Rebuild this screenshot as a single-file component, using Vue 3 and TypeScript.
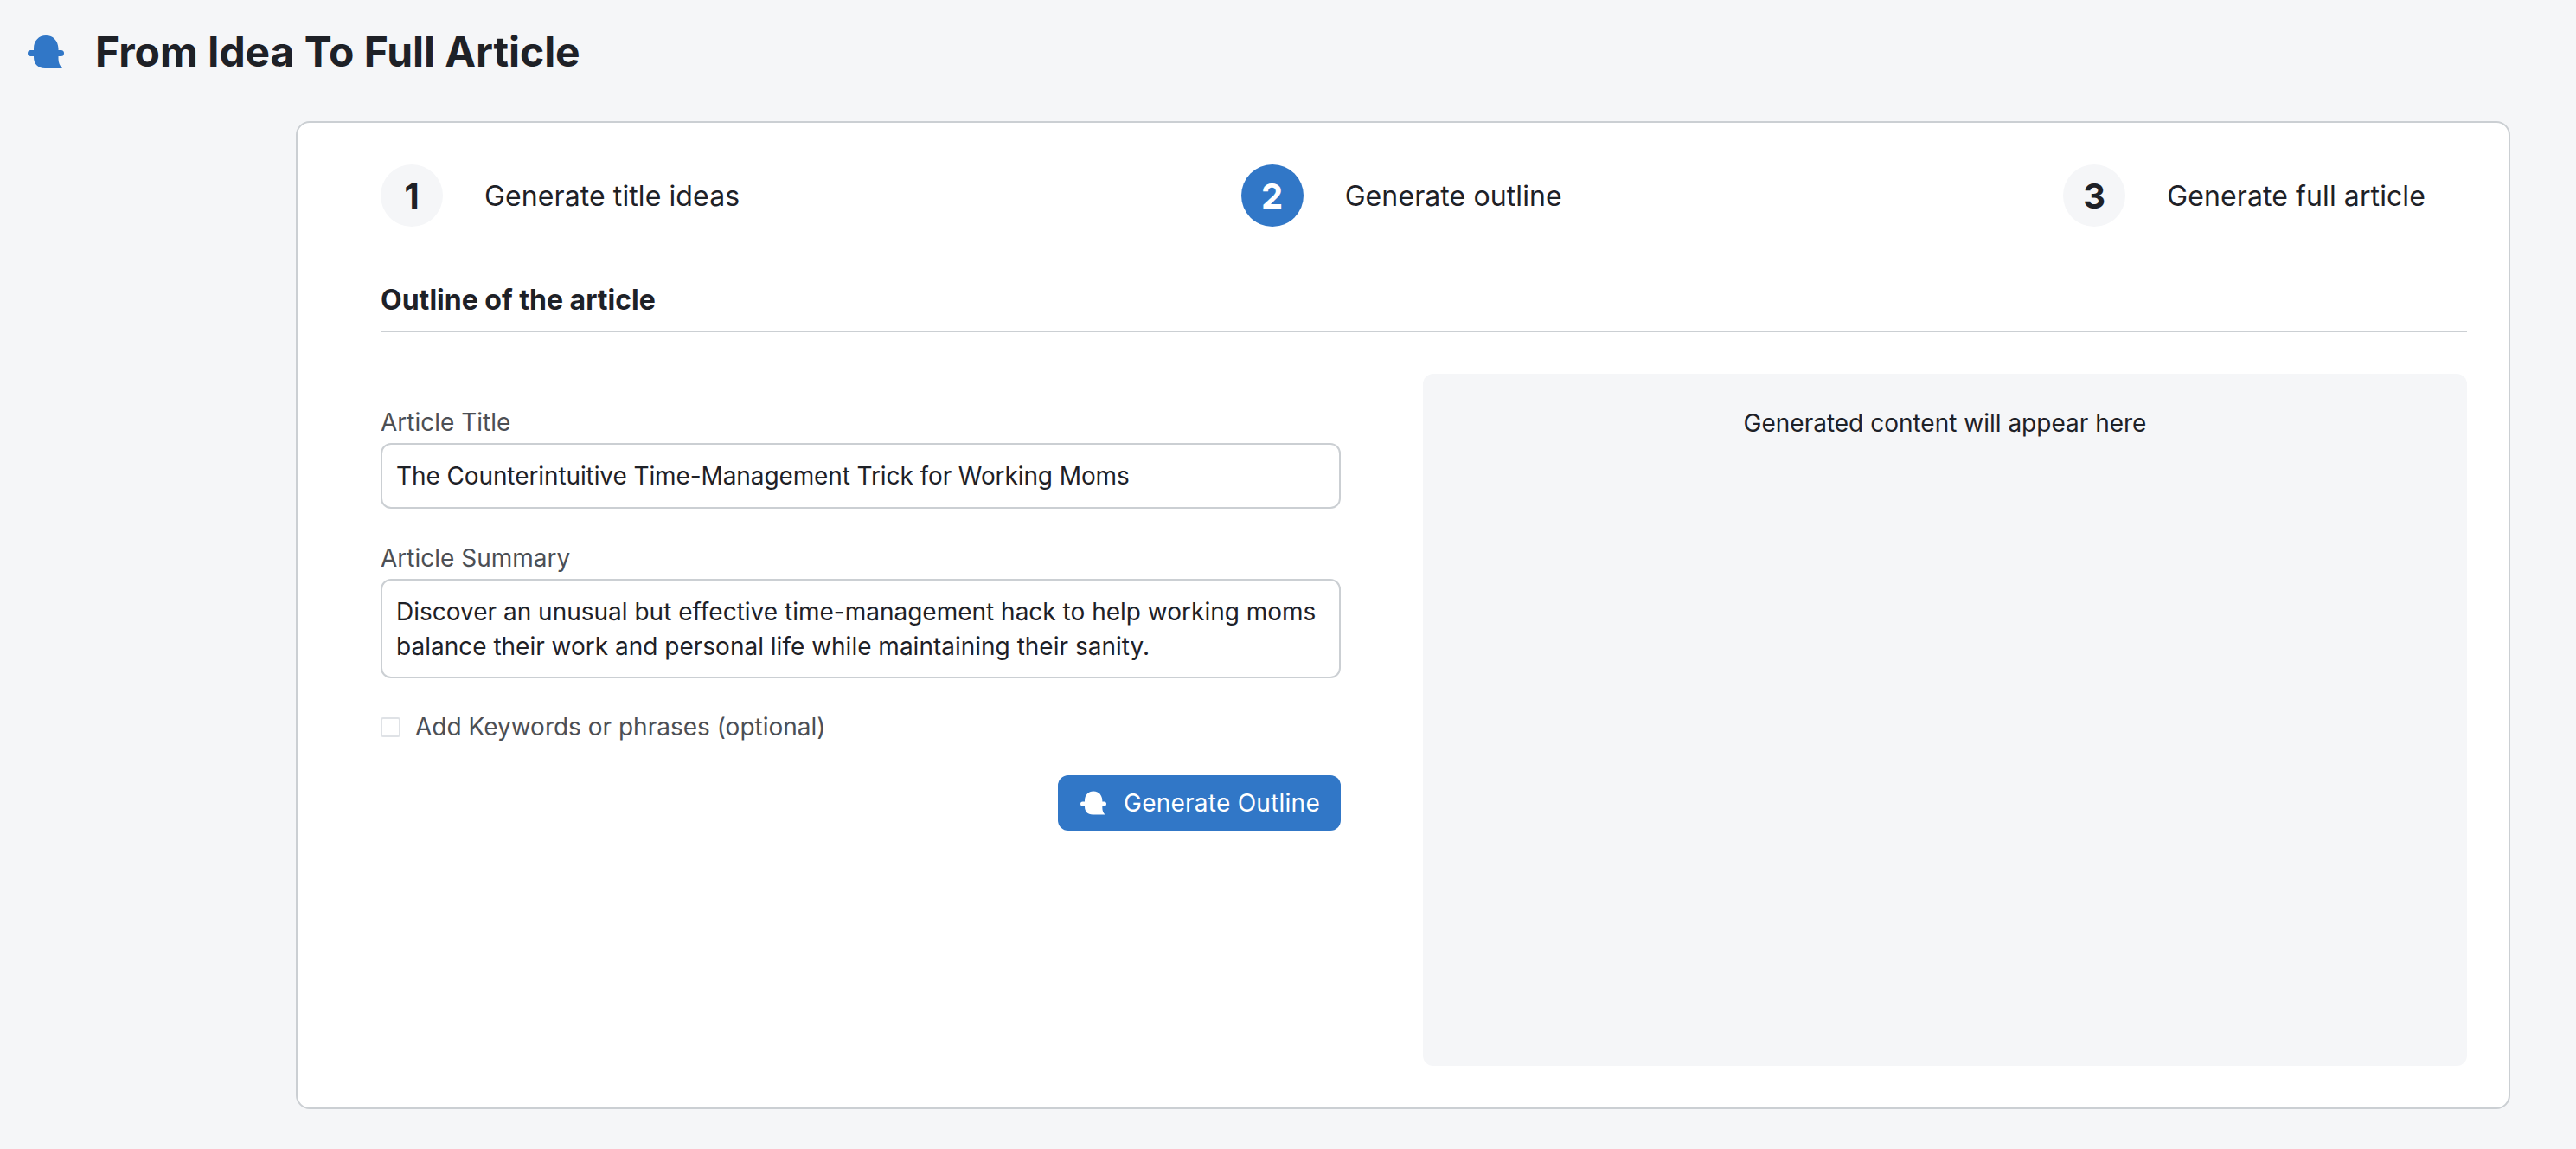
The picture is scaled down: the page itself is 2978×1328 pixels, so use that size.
<script setup lang="ts">
import { ref } from 'vue'

const steps = [
  { n: 1, label: 'Generate title ideas', active: false },
  { n: 2, label: 'Generate outline', active: true },
  { n: 3, label: 'Generate full article', active: false },
]
const title = ref('The Counterintuitive Time-Management Trick for Working Moms')
const summary = ref('Discover an unusual but effective time-management hack to help working moms balance their work and personal life while maintaining their sanity.')
const keywords = ref(false)
const bust = 'M21 0C29.5 0 35 6 35.5 15V27C35.5 31 37 35 40 38H20C11.5 38 7 32.5 7 25V15C7 6 13 0 21 0Z'
</script>

<template>
  <div class="page">
    <header class="header">
      <svg class="logo" viewBox="0 0 42 38" aria-hidden="true">
        <path :d="bust" />
        <rect x="0" y="17" width="42" height="7" rx="3.5" />
      </svg>
      <h1 class="title">From Idea To Full Article</h1>
    </header>

    <main class="card">
      <ol class="steps">
        <li v-for="s in steps" :key="s.n" class="step">
          <span class="num" :class="{ active: s.active }">{{ s.n }}</span>
          <span class="step-label">{{ s.label }}</span>
        </li>
      </ol>

      <h2 class="section">Outline of the article</h2>

      <div class="columns">
        <form class="form" @submit.prevent>
          <label class="field">
            <span class="label">Article Title</span>
            <input v-model="title" class="control input" type="text" />
          </label>
          <label class="field summary">
            <span class="label">Article Summary</span>
            <textarea v-model="summary" class="control textarea" rows="2"></textarea>
          </label>
          <label class="check">
            <input v-model="keywords" class="box" type="checkbox" />
            <span>Add Keywords or phrases (optional)</span>
          </label>
          <div class="actions">
            <button class="btn" type="submit">
              <svg class="btn-icon" viewBox="0 0 42 38" aria-hidden="true">
                <path :d="bust" />
                <rect x="0" y="17" width="42" height="7" rx="3.5" />
              </svg>
              Generate Outline
            </button>
          </div>
        </form>
        <section class="output">Generated content will appear here</section>
      </div>
    </main>
  </div>
</template>

<style>
html, body { margin: 0; background: #f5f6f8; }
</style>

<style scoped>
.page {
  box-sizing: border-box;
  width: 2978px;
  height: 1328px;
  padding: 28px 76px 46px 32px;
  background: #f5f6f8;
  color: #1e2127;
  font-family: Inter, "Liberation Sans", sans-serif;
}
.header { display: flex; align-items: center; gap: 36px; height: 64px; }
.logo { width: 42px; height: 38px; fill: #3177c7; }
.title {
  margin: 0;
  font-size: 48px;
  line-height: 64px;
  font-weight: 700;
  letter-spacing: -0.05px;
}
.card {
  box-sizing: border-box;
  display: flex;
  flex-direction: column;
  height: 1142px;
  margin: 48px 0 0 310px;
  padding: 48px 48px 48px 96px;
  background: #fff;
  border: 2px solid #cbcfd3;
  border-radius: 16px;
}
.steps {
  display: flex;
  justify-content: space-between;
  margin: 0;
  padding: 0 48px 0 0;
  list-style: none;
}
.step { display: flex; align-items: center; gap: 48px; }
.num {
  display: flex;
  align-items: center;
  justify-content: center;
  width: 72px;
  height: 72px;
  border-radius: 50%;
  background: #f5f6f8;
  font-size: 40px;
  font-weight: 700;
}
.num.active { background: #3177c7; color: #fff; }
.step-label { padding-top: 2px; font-size: 32px; line-height: 44px; letter-spacing: 0.1px; }
.section {
  margin: 63px 0 0;
  padding-bottom: 13px;
  border-bottom: 2px solid #cbcfd3;
  font-size: 32px;
  line-height: 44px;
  font-weight: 700;
}
.columns {
  flex: 1;
  display: grid;
  grid-template-columns: 1110px 1207px;
  justify-content: space-between;
  margin-top: 48px;
}
.form { display: flex; flex-direction: column; padding-top: 38px; }
.field { display: flex; flex-direction: column; gap: 6px; }
.summary { margin-top: 39px; }
.label { font-size: 28px; line-height: 36px; color: #4c4f55; }
.control {
  box-sizing: border-box;
  width: 100%;
  padding: 0 16px;
  border: 2px solid #cbcfd3;
  border-radius: 12px;
  background: #fff;
  color: #1e2127;
  font: 28px/40px Inter, "Liberation Sans", sans-serif;
  outline: none;
}
.input { height: 76px; letter-spacing: -0.1px; }
.textarea { display: block; height: 115px; padding: 16px; resize: none; overflow: hidden; }
.check {
  display: flex;
  align-items: center;
  gap: 17px;
  margin-top: 34px;
  font-size: 28px;
  line-height: 44px;
  color: #4c4f55;
}
.box {
  appearance: none;
  box-sizing: border-box;
  width: 23px;
  height: 23px;
  margin: 0;
  border: 2px solid #dfe2e6;
  border-radius: 3px;
  background: #fff;
}
.actions { display: flex; justify-content: flex-end; margin-top: 34px; }
.btn {
  display: flex;
  align-items: center;
  gap: 20px;
  height: 64px;
  padding: 0 24px 0 26px;
  border: 0;
  border-radius: 12px;
  background: #3177c7;
  color: #fff;
  font: 28px/40px Inter, "Liberation Sans", sans-serif;
  letter-spacing: 0.25px;
}
.btn-icon { width: 30px; height: 28px; fill: #fff; }
.output {
  padding-top: 37px;
  border-radius: 12px;
  background: #f5f6f8;
  font-size: 28px;
  line-height: 40px;
  text-align: center;
}
</style>
